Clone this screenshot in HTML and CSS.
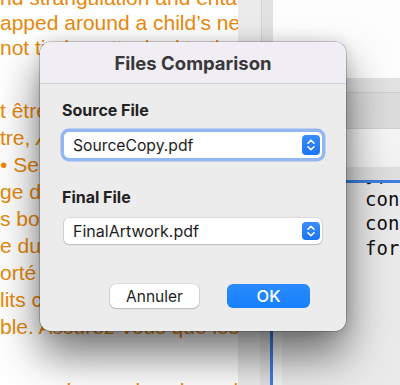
FILE: index.html
```html
<!DOCTYPE html>
<html>
<head>
<meta charset="utf-8">
<link rel="stylesheet" href="styles.css">
</head>
<body>
<div class="desktop">
  <div class="doc">
    <div class="para para-top">
      <div class="line">nd strangulation and entanglement</div>
      <div class="line">apped around a child’s neck</div>
      <div class="line">not tied or attached to the M</div>
    </div>
    <div class="para para-mid">
      <div class="line">t être</div>
      <div class="line">tre, <i>A</i></div>
      <div class="line">• Se</div>
      <div class="line">ge do</div>
      <div class="line">s bou</div>
      <div class="line">e du</div>
      <div class="line">orté</div>
      <div class="line">lits c</div>
      <div class="line">ble. Assurez-vous que les</div>
    </div>
    <div class="para para-bottom">
      <div class="line">ranger les cordons hors de portée du Tit</div>
    </div>
  </div>
  <div class="strip">
    <div class="strip-top">
      <div class="s-a"></div><div class="s-line"></div><div class="s-b"></div>
    </div>
    <div class="strip-bottom">
      <div class="s-c"></div><div class="s-d"></div><div class="s-blue"></div>
    </div>
  </div>
  <div class="side">
    <div class="side-white"></div>
    <div class="toolbar">
      <div class="tb-a"></div>
      <div class="tb-line"></div>
      <div class="tb-b"></div>
    </div>
    <div class="side-light"></div>
    <div class="side-gray"></div>
    <div class="side-blue"></div>
    <div class="code">
      <div class="gutter"></div>
      <div class="code-text">
        <div class="code-line clip">};</div>
        <div class="code-line">const</div>
        <div class="code-line">const</div>
        <div class="code-line">for</div>
      </div>
    </div>
  </div>
</div>

<div class="dialog">
  <div class="titlebar">Files Comparison</div>
  <div class="dialog-body">
    <div class="label">Source File</div>
    <div class="select focused">
      <span class="select-text">SourceCopy.pdf</span>
      <span class="stepper">
        <svg width="18" height="20" viewBox="0 0 18 20"><path d="M6 8.2 L9 5.2 L12 8.2 M6 11.8 L9 14.8 L12 11.8" fill="none" stroke="#fff" stroke-width="1.6" stroke-linecap="round" stroke-linejoin="round"/></svg>
      </span>
    </div>
    <div class="label label-second">Final File</div>
    <div class="select plain">
      <span class="select-text">FinalArtwork.pdf</span>
      <span class="stepper small">
        <svg width="18" height="18" viewBox="0 0 18 18"><path d="M6 7.3 L9 4.3 L12 7.3 M6 10.7 L9 13.7 L12 10.7" fill="none" stroke="#fff" stroke-width="1.6" stroke-linecap="round" stroke-linejoin="round"/></svg>
      </span>
    </div>
    <div class="buttons">
      <button class="btn btn-cancel">Annuler</button>
      <button class="btn btn-ok">OK</button>
    </div>
  </div>
</div>
</body>
</html>
```

FILE: styles.css
```css
html, body {
  margin: 0;
  padding: 0;
}
body {
  width: 400px;
  height: 385px;
  overflow: hidden;
  position: relative;
  background: #ffffff;
}
.desktop {
  display: flex;
  height: 385px;
}
.doc {
  width: 238px;
  flex: none;
  background: #ffffff;
  overflow: hidden;
  font-family: "Liberation Sans", Arial, sans-serif;
  font-size: 21px;
  color: #e8890c;
  white-space: nowrap;
}
.para-top {
  margin-top: -15px;
  line-height: 25px;
}
.para-mid {
  margin-top: 37px;
  line-height: 27px;
}
.para-bottom {
  margin-top: 37px;
  line-height: 27px;
}
.strip {
  width: 35px;
  flex: none;
  display: flex;
  flex-direction: column;
}
.strip-top {
  height: 160px;
  display: flex;
}
.s-a { width: 23px; background: #ebebeb; }
.s-line { width: 1px; background: #d2d2d2; }
.s-b { flex: 1; background: #e2e2e2; }
.strip-bottom {
  flex: 1;
  display: flex;
}
.s-c { width: 22px; background: #ececec; }
.s-d { width: 10px; background: #e0e0e0; }
.s-blue { width: 3px; background: #3d7de0; }
.side {
  flex: 1;
  display: flex;
  flex-direction: column;
}
.side-white {
  height: 78px;
  background: #fdfdfd;
}
.toolbar {
  height: 50px;
  display: flex;
  flex-direction: column;
}
.tb-a { height: 14px; background: #e2e2e2; }
.tb-line { height: 1px; background: #cdcdcd; }
.tb-b { flex: 1; background: #dcdcdc; }
.side-light {
  height: 38px;
  background: linear-gradient(#f6f6f6, #f1f1f1);
  border-top: 1px solid #cfcfcf;
}
.side-gray {
  height: 13px;
  background: #dedede;
}
.side-blue {
  height: 3px;
  background: #3f7ddf;
}
.code {
  flex: 1;
  display: flex;
  background: #eaeaea;
}
.gutter {
  width: 9px;
  background: #f3f3f3;
}
.code-text {
  padding-left: 83px;
  overflow: hidden;
  font-family: "DejaVu Sans Mono", "Liberation Mono", monospace;
  font-size: 19px;
  line-height: 24.5px;
  color: #111111;
  white-space: nowrap;
}
.code-line.clip {
  margin-top: -21px;
}

/* dialog */
.dialog {
  position: absolute;
  left: 40px;
  top: 42px;
  width: 306px;
  height: 289px;
  box-sizing: border-box;
  border-radius: 11px;
  background: #ececec;
  overflow: hidden;
  font-family: Inter, "Noto Sans", sans-serif;
  box-shadow: 0 0 0 0.6px rgba(0,0,0,0.32), 0 24px 44px rgba(0,0,0,0.55), 0 0 14px rgba(0,0,0,0.14);
}
.titlebar {
  height: 41px;
  background: #f1edf4;
  border-bottom: 1px solid #d4d1d7;
  display: flex;
  align-items: center;
  justify-content: center;
  font-weight: 700;
  font-size: 18.5px;
  color: #38383a;
}
.dialog-body {
  padding: 16px 24px 0 22px;
  display: flex;
  flex-direction: column;
}
.label {
  font-weight: 700;
  font-size: 16px;
  line-height: 20px;
  color: #222222;
}
.label-second {
  margin-top: 29px;
}
.select {
  margin-left: 2px;
  height: 26px;
  background: #ffffff;
  border-radius: 5px;
  display: flex;
  align-items: center;
  justify-content: space-between;
  padding-left: 9px;
  padding-right: 2px;
  font-size: 15.7px;
  color: #1d1d1d;
}
.select.focused {
  margin-top: 12px;
  box-shadow: 0 0 0 3.5px #93b7f0;
}
.select.plain {
  margin-top: 11px;
  font-size: 16px;
  box-shadow: 0 0 0 0.6px rgba(0,0,0,0.16), 0 1px 1.5px rgba(0,0,0,0.14);
}
.stepper {
  width: 18px;
  height: 20px;
  border-radius: 4px;
  background: linear-gradient(#3a8dfb, #1b74f2);
  display: flex;
}
.stepper.small {
  height: 18px;
}
.buttons {
  margin-top: 40px;
  display: flex;
  justify-content: flex-end;
  gap: 28px;
  padding-right: 12px;
}
.btn {
  height: 24px;
  border: none;
  border-radius: 6px;
  font-family: Inter, "Noto Sans", sans-serif;
  font-size: 15.5px;
  padding: 0;
}
.btn-cancel {
  width: 89px;
  background: #ffffff;
  color: #1d1d1d;
  box-shadow: 0 0 0 0.6px rgba(0,0,0,0.14), 0 1px 1.5px rgba(0,0,0,0.16);
}
.btn-ok {
  width: 83px;
  background: linear-gradient(#2a8cfd, #1680fb);
  color: #ffffff;
  font-weight: 500;
  font-size: 16.5px;
}
```
